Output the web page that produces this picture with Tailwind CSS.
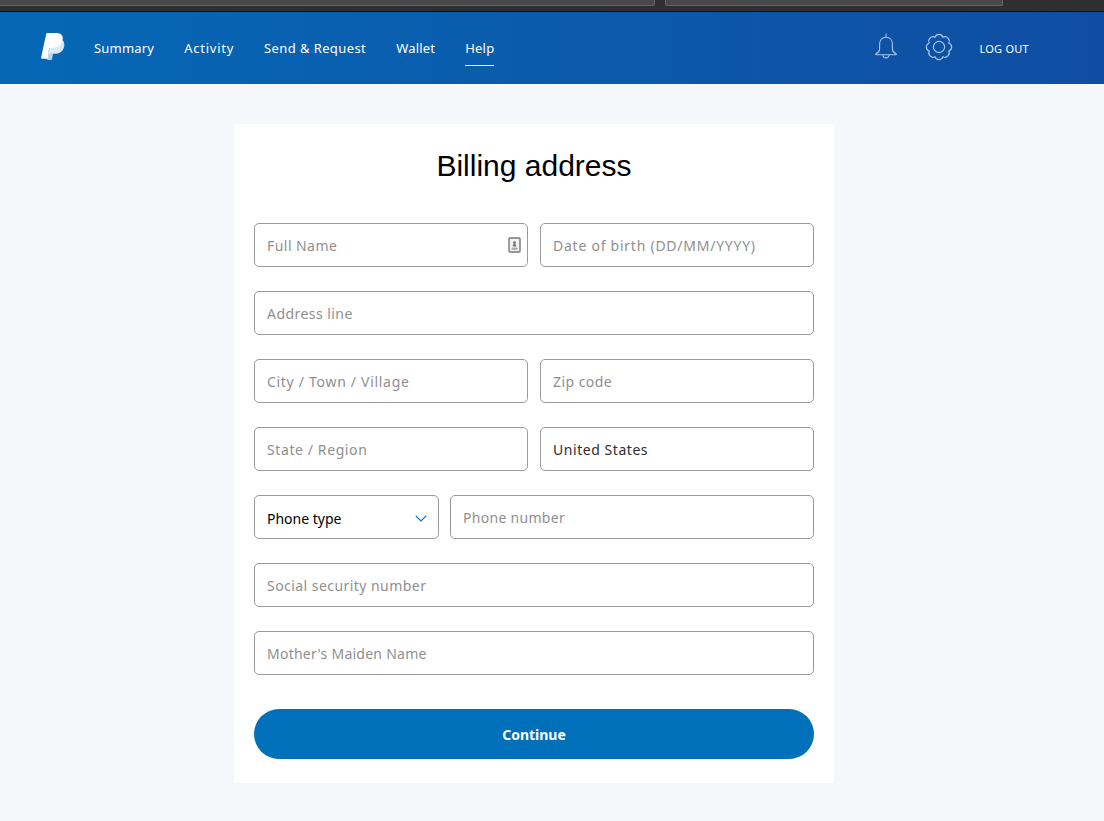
<!DOCTYPE html>
<html lang="en">
<head>
   <meta charset="UTF-8">
   <meta name="viewport" content="width=device-width, initial-scale=1.0">
   <script src="https://cdn.jsdelivr.net/npm/@tailwindcss/browser@4"></script>
   <title>Billing address</title>
</head>
<body class="bg-[#f5f7fa] font-['Noto_Sans',sans-serif] min-h-[821px]">
   <!-- browser strip -->
   <div class="h-[12px] bg-[#2f2f2f] border-b border-[#111] flex">
      <div class="w-[655px] h-[6px] bg-[#484848] border-b border-r border-[#666] rounded-br-[2px]"></div>
      <div class="w-[338px] h-[6px] ml-[10px] bg-[#484848] border border-t-0 border-[#666] rounded-b-[2px]"></div>
   </div>

   <header class="h-[72px] bg-gradient-to-r from-[#0568b6] to-[#0f4da2] flex items-center pl-[41px] text-white">
      <svg class="w-[24px] h-[27px] -mt-[3px]" viewBox="0 0 24 27">
         <path fill="#b9d4ee" d="M21.4 7.2c1.6 1.3 2.3 3.2 1.8 6-1 5-4.3 7.4-9 7.4h-1.1c-.7 0-1.2.5-1.3 1.2l-.7 4.2c-.1.6-.5 1-1.1 1H6.6c-.5 0-.8-.4-.7-.9L7 20l8-9z"/>
         <path fill="#fff" d="M5.2.9C5.3.4 5.8 0 6.4 0h8.4c2.6 0 4.8.6 5.9 1.9 1.1 1.3 1.3 3 .9 5.1-.9 5.2-4.3 8-9.4 8H9.4c-.7 0-1.2.5-1.3 1.1L6.7 25c-.1.4-.4.7-.8.7H1c-.6 0-1-.5-.9-1.1z"/>
         <path fill="#dbe8f6" d="M21.6 7.1c-.9 5.2-4.3 7.9-9.4 7.9H9.4c-.7 0-1.2.5-1.3 1.1l-.9 5.3c.1-.5.6-.8 1.1-.8h5.9c4.7 0 7.6-2.6 8.5-7 .4-2.6-.1-5-1.1-6.6z"/>
      </svg>
      <nav class="flex items-center gap-[30px] ml-[29px] text-[13px] tracking-[0.4px]">
         <a class="h-[72px] flex items-center pt-[1px] tracking-[0.2px]">Summary</a>
         <a class="h-[72px] flex items-center pt-[1px] tracking-[0.75px]">Activity</a>
         <a class="h-[72px] flex items-center pt-[1px]">Send &amp; Request</a>
         <a class="h-[72px] flex items-center pt-[1px] tracking-[0.2px]">Wallet</a>
         <a class="h-[72px] flex items-center pt-[1px] relative tracking-[0.2px]">Help<span class="absolute left-0 right-0 top-[53px] h-px bg-white"></span></a>
      </nav>
      <div class="ml-auto flex items-center mr-[75px]">
         <svg class="w-[24px] h-[28px] -mt-[2px]" viewBox="0 0 24 28" fill="none" stroke="#a9c6e8" stroke-width="1.1" stroke-linecap="round" stroke-linejoin="round">
            <path d="M12 1v3.2M12 4.2c-4.2 0-6.4 3.2-6.4 6.8v5.2c0 2-1.5 3.4-3.6 4.6-.6.4-.4 1 .2 1h19.6c.6 0 .8-.6.2-1-2.1-1.2-3.6-2.6-3.6-4.6V11c0-3.6-2.2-6.8-6.4-6.8z"/>
            <path d="M9 22.6c.4 1.5 1.5 2.3 3 2.3s2.6-.8 3-2.3"/>
         </svg>
         <svg class="w-[28px] h-[28px] ml-[27px] -mt-[2px]" viewBox="0 0 24 24" fill="none" stroke="#a9c6e8" stroke-width="1" stroke-linejoin="round">
            <circle cx="12" cy="12" r="4.8"/>
            <path d="M15.44 3.69A3.6 3.6 0 0 1 20.31 8.56 3.6 3.6 0 0 1 20.31 15.44 3.6 3.6 0 0 1 15.44 20.31 3.6 3.6 0 0 1 8.56 20.31 3.6 3.6 0 0 1 3.69 15.44 3.6 3.6 0 0 1 3.69 8.56 3.6 3.6 0 0 1 8.56 3.69 3.6 3.6 0 0 1 15.44 3.69Z"/>
         </svg>
         <a class="ml-[26px] mt-[2px] text-[11px] tracking-[0.25px]">LOG OUT</a>
      </div>
   </header>

   <main class="w-[600px] h-[659px] mt-[40px] ml-[234px] bg-white px-[20px] pt-[20px]">
      <h1 class="text-center text-[30px] leading-[44px] text-black font-['Liberation_Sans',sans-serif] mb-[35px]">Billing address</h1>
      <form class="flex flex-col gap-[24px] text-[14px] tracking-[0.45px]">
         <div class="grid grid-cols-2 gap-[12px]">
            <div class="relative">
               <input class="w-full h-[44px] border border-[#9a9a9a] rounded-[5px] px-[12px] placeholder:text-[#8f8f8f] outline-none" placeholder="Full Name">
               <svg class="absolute right-[7px] top-[14px] w-[13px] h-[16px]" viewBox="0 0 13 16">
                  <rect x="1" y="1" width="11" height="14" rx="1" fill="#f2f2f2" stroke="#777" stroke-width="1.4"/>
                  <circle cx="6.5" cy="5.6" r="1.4" fill="#777"/>
                  <path fill="#777" d="M5.6 6.6h1.8l1 3H4.6z"/>
                  <rect x="3.5" y="10.6" width="6" height="2.2" fill="#aaa"/>
               </svg>
            </div>
            <input class="w-full h-[44px] border border-[#9a9a9a] rounded-[5px] px-[12px] tracking-[0.75px] placeholder:text-[#8f8f8f] outline-none" placeholder="Date of birth (DD/MM/YYYY)">
         </div>
         <input class="w-full h-[44px] border border-[#9a9a9a] rounded-[5px] px-[12px] placeholder:text-[#8f8f8f] outline-none" placeholder="Address line">
         <div class="flex gap-[12px]">
            <input class="flex-1 min-w-0 h-[44px] border border-[#9a9a9a] rounded-[5px] px-[12px] tracking-[0.7px] placeholder:text-[#8f8f8f] outline-none" placeholder="City / Town / Village">
            <input class="flex-1 min-w-0 h-[44px] border border-[#9a9a9a] rounded-[5px] px-[12px] placeholder:text-[#8f8f8f] outline-none" placeholder="Zip code">
         </div>
         <div class="flex gap-[12px]">
            <input class="flex-1 min-w-0 h-[44px] border border-[#9a9a9a] rounded-[5px] px-[12px] tracking-[0.6px] placeholder:text-[#8f8f8f] outline-none" placeholder="State / Region">
            <input class="flex-1 min-w-0 h-[44px] border border-[#9a9a9a] rounded-[5px] px-[12px] tracking-[0.55px] text-[#2c2e2f] outline-none" value="United States">
         </div>
         <div class="flex gap-[11px]">
            <div class="relative w-[185px]">
               <div class="h-[44px] border border-[#9a9a9a] rounded-[5px] pl-[12px] flex items-center text-black tracking-normal pt-[2px]">Phone type</div>
               <svg class="absolute right-[12px] top-[20px] w-[12px] h-[7px]" viewBox="0 0 12 7" fill="none" stroke="#0070ba" stroke-width="1.2"><path d="M.8.8 6 6l5.2-5.2"/></svg>
            </div>
            <input class="flex-1 min-w-0 h-[44px] border border-[#9a9a9a] rounded-[5px] px-[12px] tracking-[0.3px] placeholder:text-[#8f8f8f] outline-none" placeholder="Phone number">
         </div>
         <input class="w-full h-[44px] border border-[#9a9a9a] rounded-[5px] px-[12px] placeholder:text-[#8f8f8f] outline-none" placeholder="Social security number">
         <input class="w-full h-[44px] border border-[#9a9a9a] rounded-[5px] px-[12px] tracking-[0.25px] placeholder:text-[#8f8f8f] outline-none" placeholder="Mother's Maiden Name">
         <button type="button" class="mt-[10px] w-full h-[50px] rounded-full bg-[#0070ba] text-white font-bold tracking-normal">Continue</button>
      </form>
   </main>
</body>
</html>
